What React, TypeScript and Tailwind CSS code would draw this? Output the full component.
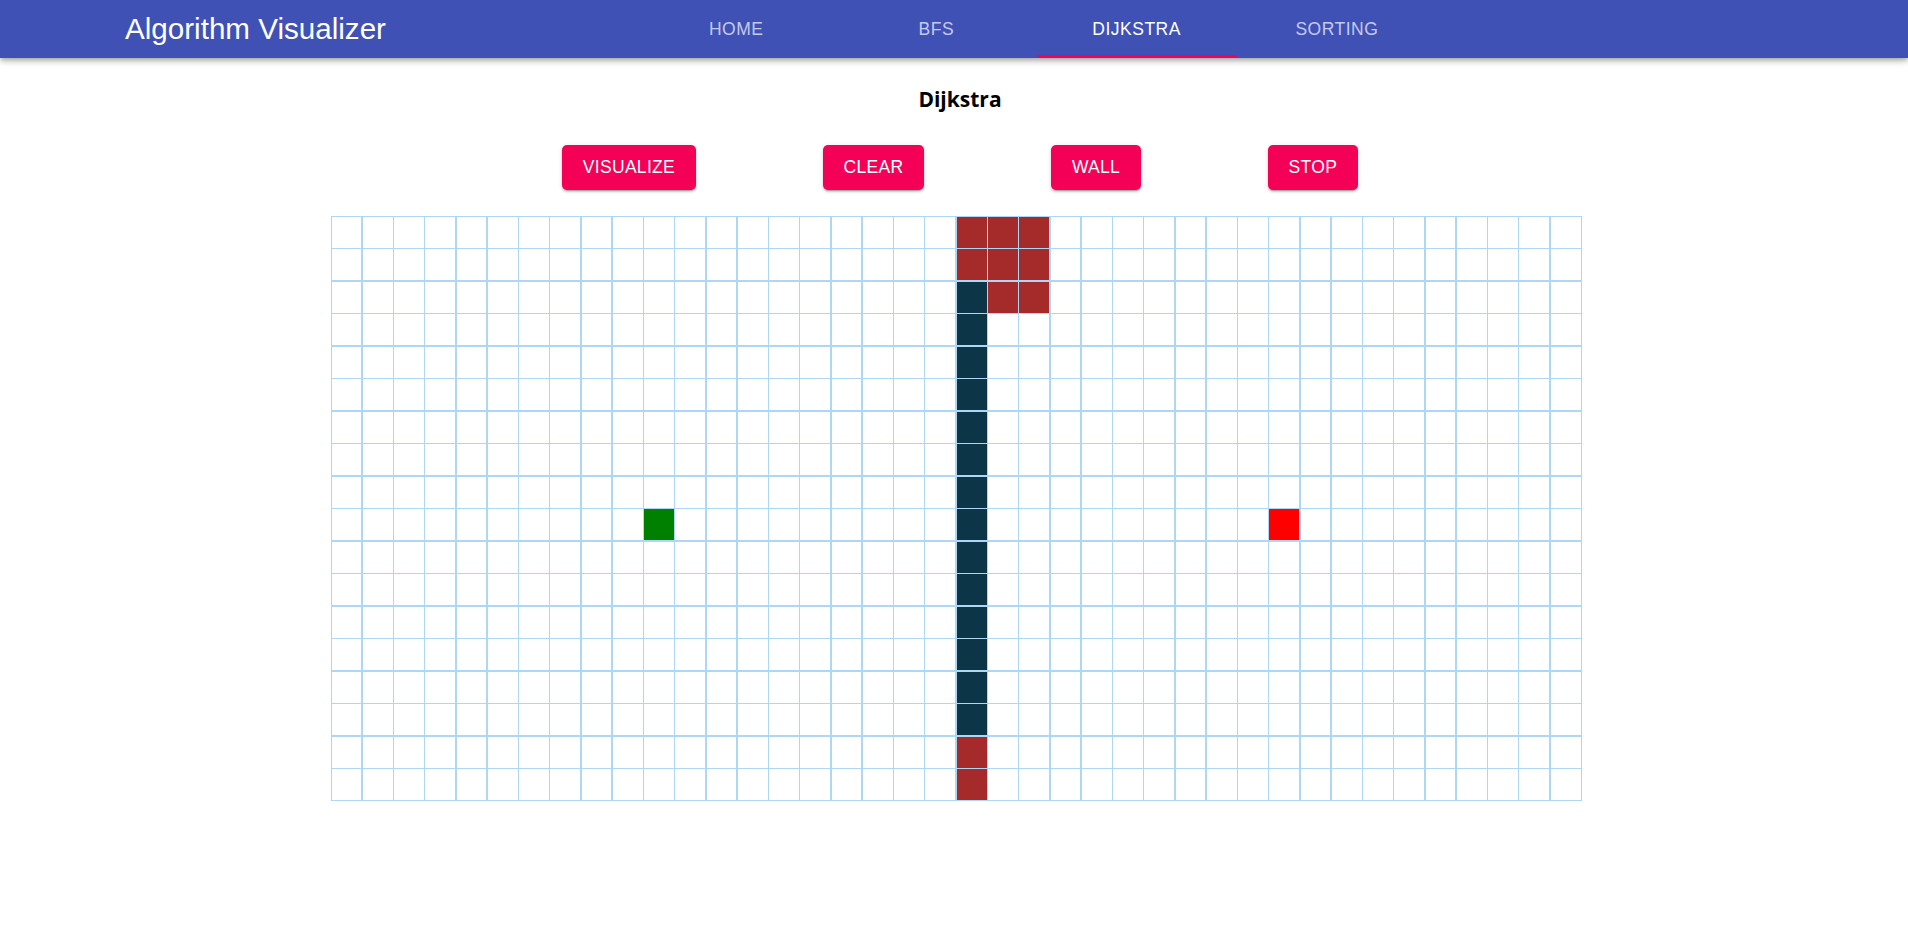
import React from "react";

const ROWS = 18;
const COLS = 40;
const START = { r: 9, c: 10 };
const END = { r: 9, c: 30 };

function cellColor(r: number, c: number) {
  if (r === START.r && c === START.c) return "bg-[#008000]";
  if (r === END.r && c === END.c) return "bg-[#ff0000]";
  if (r <= 1 && c >= 20 && c <= 22) return "bg-[#a52a2a]";
  if (r === 2 && (c === 21 || c === 22)) return "bg-[#a52a2a]";
  if (c === 20 && r >= 2 && r <= 15) return "bg-[#0c3547]";
  if (c === 20 && r >= 16) return "bg-[#a52a2a]";
  return "bg-white";
}

const tabs = ["HOME", "BFS", "DIJKSTRA", "SORTING"];
const buttons = ["VISUALIZE", "CLEAR", "WALL", "STOP"];

export default function App() {
  const cells = [];
  for (let r = 0; r < ROWS; r++) {
    for (let c = 0; c < COLS; c++) {
      cells.push(<div key={r + "-" + c} className={cellColor(r, c)} />);
    }
  }

  return (
    <div className="min-h-[930px] w-full bg-white font-['Liberation_Sans',Arial,sans-serif]">
      <nav className="flex h-[58px] w-full items-center bg-[#3f51b5] shadow-[0_2px_4px_-1px_rgba(0,0,0,0.2),0_4px_5px_0_rgba(0,0,0,0.14),0_1px_10px_0_rgba(0,0,0,0.12)]">
        <div className="w-[636px] pl-[125px] text-[29.6px] leading-none text-white">
          Algorithm Visualizer
        </div>
        <ul className="flex h-full">
          {tabs.map((t) => (
            <li
              key={t}
              className={
                "relative flex h-full w-[200.25px] items-center justify-center text-[17.5px] tracking-[0.5px] " +
                (t === "DIJKSTRA" ? "text-white" : "text-[#c5cae9]")
              }
            >
              {t}
              {t === "DIJKSTRA" && (
                <span className="absolute bottom-0 left-0 right-0 h-[3px] bg-[#f50057]" />
              )}
            </li>
          ))}
        </ul>
      </nav>

      <div className="flex flex-col items-center">
        <h1 className="mt-[26px] pl-[12px] font-['Open_Sans',sans-serif] text-[21px] font-bold leading-[30px] text-black">
          Dijkstra
        </h1>
        <div className="mt-[31px] flex gap-[126.5px] pl-[12px]">
          {buttons.map((b) => (
            <button
              key={b}
              className="h-[45px] min-w-[80px] rounded-[5px] bg-[#f50057] px-[21px] text-[17.5px] tracking-[0.3px] text-white shadow-[0_3px_1px_-2px_rgba(0,0,0,0.2),0_2px_2px_0_rgba(0,0,0,0.14),0_1px_5px_0_rgba(0,0,0,0.12)]"
            >
              {b}
            </button>
          ))}
        </div>
        <div className="ml-[4px] mt-[26px] grid h-[585px] w-[1251px] grid-cols-[repeat(40,minmax(0,1fr))] grid-rows-[repeat(18,minmax(0,1fr))] gap-[1.5px] bg-[#aed6f5] p-px">
          {cells}
        </div>
      </div>
    </div>
  );
}
